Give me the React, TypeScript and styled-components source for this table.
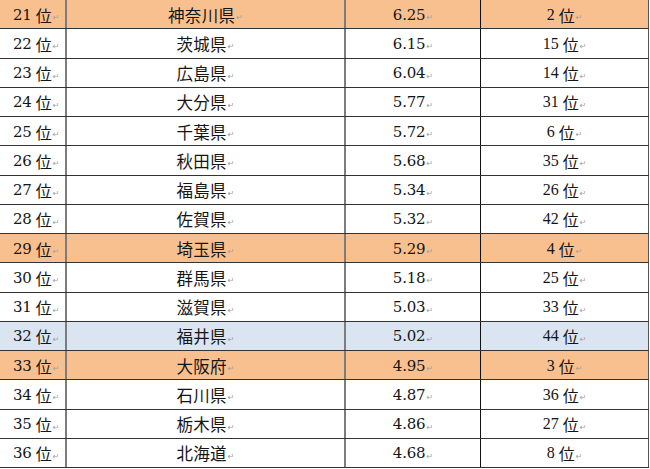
import styled, { createGlobalStyle } from 'styled-components';

const GlobalStyle = createGlobalStyle`
  html, body {
    margin: 0;
    padding: 0;
    background: #fff;
  }
`;

type Tone = 'plain' | 'orange' | 'blue';

const toneColor: Record<Tone, string> = {
  plain: '#ffffff',
  orange: '#f9c08f',
  blue: '#dbe5f1',
};

const Table = styled.div`
  width: 649px;
  display: flex;
  flex-direction: column;
  color: #151515;
`;

const Row = styled.div<{ $tone: Tone }>`
  height: 29.25px;
  box-sizing: border-box;
  display: grid;
  grid-template-columns: 67px 279px 135px 168px;
  background: ${(p) => toneColor[p.$tone]};
  border-bottom: 1.5px solid #333;
`;

const Cell = styled.div<{ $align: 'left' | 'center'; $line: string; $w?: number }>`
  display: flex;
  align-items: center;
  justify-content: ${(p) => (p.$align === 'left' ? 'flex-start' : 'center')};
  padding-left: ${(p) => (p.$align === 'left' ? '13px' : '0')};
  padding-top: 1px;
  border-right: ${(p) => p.$w ?? 1}px solid ${(p) => p.$line};
  white-space: nowrap;
`;

const Num = styled.span<{ $thin?: boolean }>`
  font-family: ${(p) => (p.$thin ? '"Liberation Serif"' : '"DejaVu Serif"')}, serif;
  font-size: ${(p) => (p.$thin ? '16px' : '15px')};
  letter-spacing: ${(p) => (p.$thin ? '0' : '-0.2px')};
`;

const Kanji = styled.span`
  font-family: "Noto Sans CJK JP", sans-serif;
  font-size: 16px;
  margin-left: 4px;
`;

const Pref = styled.span`
  font-family: "Noto Sans CJK JP", sans-serif;
  font-size: 16.5px;
  letter-spacing: 0.3px;
`;

const Mark = styled.span`
  font-family: "DejaVu Sans", sans-serif;
  font-size: 8px;
  color: #a0a0a0;
  margin-left: 1px;
  align-self: center;
  padding-top: 6px;
`;

const rows: [number, string, string, number, Tone][] = [
  [21, '神奈川県', '6.25', 2, 'orange'],
  [22, '茨城県', '6.15', 15, 'plain'],
  [23, '広島県', '6.04', 14, 'plain'],
  [24, '大分県', '5.77', 31, 'plain'],
  [25, '千葉県', '5.72', 6, 'plain'],
  [26, '秋田県', '5.68', 35, 'plain'],
  [27, '福島県', '5.34', 26, 'plain'],
  [28, '佐賀県', '5.32', 42, 'plain'],
  [29, '埼玉県', '5.29', 4, 'orange'],
  [30, '群馬県', '5.18', 25, 'plain'],
  [31, '滋賀県', '5.03', 33, 'plain'],
  [32, '福井県', '5.02', 44, 'blue'],
  [33, '大阪府', '4.95', 3, 'orange'],
  [34, '石川県', '4.87', 36, 'plain'],
  [35, '栃木県', '4.86', 27, 'plain'],
  [36, '北海道', '4.68', 8, 'plain'],
];

export default function App() {
  return (
    <>
      <GlobalStyle />
      <Table>
        {rows.map(([rank, pref, score, prev, tone]) => (
          <Row key={rank} $tone={tone}>
            <Cell $align="left" $line="#7d7d7d" $w={2}>
              <Num>{rank}</Num>
              <Kanji>位</Kanji>
              <Mark>↵</Mark>
            </Cell>
            <Cell $align="center" $line="#7d7d7d" $w={2}>
              <Pref>{pref}</Pref>
              <Mark>↵</Mark>
            </Cell>
            <Cell $align="center" $line="#111" $w={1.5}>
              <Num>{score}</Num>
              <Mark>↵</Mark>
            </Cell>
            <Cell $align="center" $line="#555" $w={1.5}>
              <Num $thin>{prev}</Num>
              <Kanji>位</Kanji>
              <Mark>↵</Mark>
            </Cell>
          </Row>
        ))}
      </Table>
    </>
  );
}
